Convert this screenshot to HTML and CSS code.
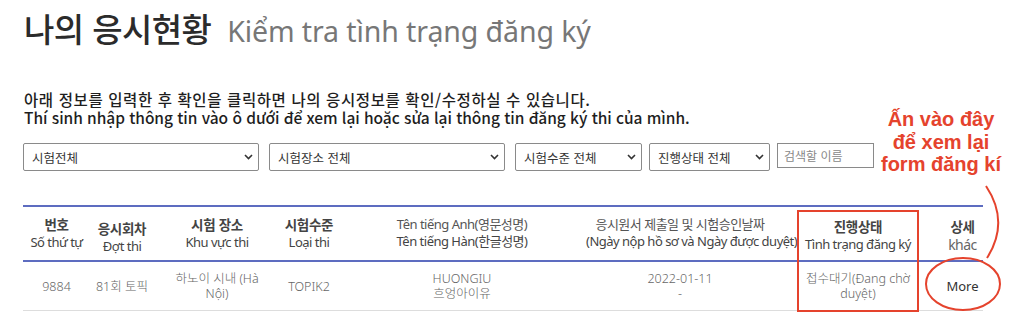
FILE: index.html
```html
<!DOCTYPE html>
<html lang="ko">
<head>
<meta charset="utf-8">
<link rel="stylesheet" href="styles.css">
</head>
<body>
<div class="page">
  <h1 class="title"><span class="title-ko">나의 응시현황</span><span class="title-vi">Kiểm tra tình trạng đăng ký</span></h1>
  <p class="intro"><span class="intro-ko">아래 정보를 입력한 후 확인을 클릭하면 나의 응시정보를 확인/수정하실 수 있습니다.</span><br><span class="intro-vi">Thí sinh nhập thông tin vào ô dưới để xem lại hoặc sửa lại thông tin đăng ký thi của mình.</span></p>
  <div class="filters">
    <div class="select w1"><span>시험전체</span><svg width="9" height="6" viewBox="0 0 9 6"><path d="M1 1l3.5 3.5L8 1" fill="none" stroke="#333" stroke-width="1.6"/></svg></div>
    <div class="select w2"><span>시험장소 전체</span><svg width="9" height="6" viewBox="0 0 9 6"><path d="M1 1l3.5 3.5L8 1" fill="none" stroke="#333" stroke-width="1.6"/></svg></div>
    <div class="select w3"><span>시험수준 전체</span><svg width="9" height="6" viewBox="0 0 9 6"><path d="M1 1l3.5 3.5L8 1" fill="none" stroke="#333" stroke-width="1.6"/></svg></div>
    <div class="select w4"><span>진행상태 전체</span><svg width="9" height="6" viewBox="0 0 9 6"><path d="M1 1l3.5 3.5L8 1" fill="none" stroke="#333" stroke-width="1.6"/></svg></div>
    <div class="search">검색할 이름</div>
  </div>
  <table class="tbl">
    <colgroup>
      <col class="c1"><col class="c2"><col class="c3"><col class="c4"><col class="c5"><col class="c6"><col class="c7"><col class="c8">
    </colgroup>
    <thead>
      <tr>
        <th><div class="hd"><b>번호</b><br>Số thứ tự</div></th>
        <th><div class="hd low"><b>응시회차</b><br>Đợt thi</div></th>
        <th><div class="hd"><b>시험 장소</b><br>Khu vực thi</div></th>
        <th><div class="hd"><b>시험수준</b><br>Loại thi</div></th>
        <th><div class="hd"><span class="ko">Tên tiếng Anh(영문성명)</span><br>Tên tiếng Hàn(한글성명)</div></th>
        <th><div class="hd"><span class="ko">응시원서 제출일 및 시험승인날짜</span><br>(Ngày nộp hồ sơ và Ngày được duyệt)</div></th>
        <th><div class="hd mid"><b>진행상태</b><br>Tình trạng đăng ký</div></th>
        <th><div class="hd mid"><b>상세</b><br><span class="khac">khác</span></div></th>
      </tr>
    </thead>
    <tbody>
      <tr>
        <td>9884</td>
        <td>81회 토픽</td>
        <td>하노이 시내 (Hà<br>Nội)</td>
        <td>TOPIK2</td>
        <td>HUONGIU<br>흐엉아이유</td>
        <td>2022-01-11<br>-</td>
        <td>접수대기(Đang chờ<br>duyệt)</td>
        <td class="more">More</td>
      </tr>
    </tbody>
  </table>
</div>
<div class="note">Ấn vào đây<br>để xem lại<br>form đăng kí</div>
<svg class="marks" width="1024" height="316" viewBox="0 0 1024 316">
  <rect x="798" y="211" width="120" height="100" fill="none" stroke="#e5432d" stroke-width="2"/>
  <ellipse cx="963" cy="284" rx="37" ry="26" fill="none" stroke="#e5432d" stroke-width="2"/>
  <path d="M986 186 Q1010 222 987 258" fill="none" stroke="#e5432d" stroke-width="2"/>
</svg>
</body>
</html>
```
FILE: styles.css
```css
html, body {
  margin: 0;
  padding: 0;
  background: #fff;
}
body {
  width: 1024px;
  height: 316px;
  overflow: hidden;
  position: relative;
  font-family: "Noto Sans", "Noto Sans CJK KR", sans-serif;
}
.page {
  padding-left: 23px;
  width: 961px;
}
.title {
  margin: 9px 0 0 1px;
  height: 38px;
  line-height: 38px;
  display: flex;
  align-items: baseline;
  gap: 16px;
  font-weight: normal;
}
.title-ko {
  font-family: "Noto Sans CJK KR", sans-serif;
  font-size: 33px;
  font-weight: 500;
  color: #2b2b2b;
  letter-spacing: -0.6px;
}
.title-vi {
  font-family: "Noto Sans", sans-serif;
  font-size: 28.5px;
  color: #777;
  letter-spacing: -0.1px;
}
.intro {
  margin: 43px 0 0 1px;
  font-family: "Noto Sans CJK KR", sans-serif;
  font-size: 15.5px;
  line-height: 18px;
  font-weight: 500;
  color: #1e1e1e;
}
.intro-ko { letter-spacing: 0.6px; }
.intro-vi { letter-spacing: -0.04px; }
.filters {
  margin-top: 17px;
  display: flex;
  align-items: flex-start;
  gap: 10px;
}
.select {
  box-sizing: border-box;
  height: 28px;
  border: 1px solid #8a8a8a;
  border-radius: 2px;
  padding: 0 5px 0 8px;
  display: flex;
  align-items: center;
  justify-content: space-between;
  font-family: "Noto Sans CJK KR", sans-serif;
  font-size: 12.5px;
  color: #333;
}
.w1 { width: 236px; }
.w2 { width: 236px; }
.w3 { width: 127px; }
.w4 { width: 121px; margin-left: -3px; }
.search {
  box-sizing: border-box;
  width: 97px;
  height: 25px;
  margin-left: -3px;
  border: 1px solid #8a8a8a;
  padding: 0 6px;
  line-height: 23px;
  font-family: "Noto Sans CJK KR", sans-serif;
  font-size: 12px;
  color: #888;
}
.tbl {
  margin-top: 34px;
  width: 960px;
  border-collapse: collapse;
  table-layout: fixed;
}
.c1 { width: 67px; }
.c2 { width: 64px; }
.c3 { width: 126px; }
.c4 { width: 58px; }
.c5 { width: 248px; }
.c6 { width: 188px; }
.c7 { width: 168px; }
.c8 { width: 41px; }
.tbl th {
  border-top: 2px solid #5d6cc0;
  border-bottom: 2px solid #5d6cc0;
  height: 53px;
  padding: 0;
  vertical-align: top;
  font-family: "Noto Sans", "Noto Sans CJK KR", sans-serif;
  font-weight: normal;
  font-size: 13px;
  color: #444;
  letter-spacing: -0.5px;
  white-space: nowrap;
}
.hd {
  padding-top: 9px;
  line-height: 17px;
}
.hd.low { padding-top: 13px; }
.hd.mid { padding-top: 11px; }
.tbl th b {
  font-family: "Noto Sans CJK KR", sans-serif;
  font-weight: 700;
  font-size: 13.5px;
  color: #444;
  letter-spacing: -0.3px;
}
.tbl th .ko {
  font-size: 13px;
  color: #555;
}
.tbl th .khac {
  font-size: 14px;
  color: #666;
}
.tbl td {
  height: 48px;
  padding: 0;
  border-bottom: 1px solid #ddd;
  text-align: center;
  font-family: "Noto Sans", "Noto Sans CJK KR", sans-serif;
  font-weight: 300;
  font-size: 12.5px;
  line-height: 15px;
  color: #666;
  white-space: nowrap;
}
.tbl td.more {
  color: #333;
  font-weight: normal;
  font-size: 13px;
}
.note {
  position: absolute;
  left: 860px;
  top: 108px;
  width: 162px;
  text-align: center;
  font-family: "Liberation Sans", Arial, sans-serif;
  font-weight: bold;
  font-size: 20px;
  line-height: 22.5px;
  color: #e5432d;
}
.marks {
  position: absolute;
  left: 0;
  top: 0;
  pointer-events: none;
}
```
